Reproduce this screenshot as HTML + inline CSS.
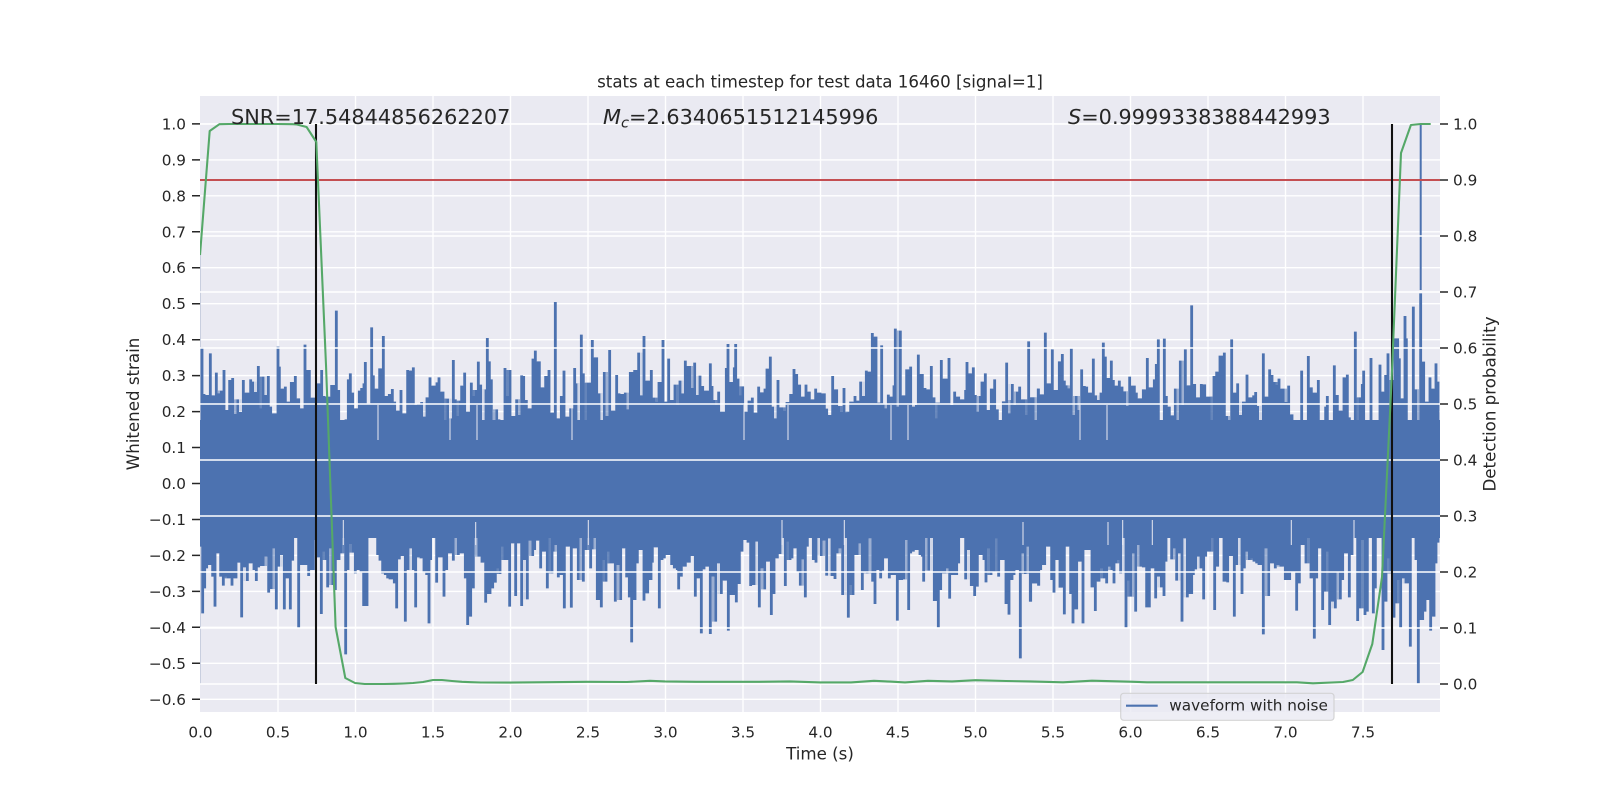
<!DOCTYPE html>
<html>
<head>
<meta charset="utf-8">
<title>stats at each timestep</title>
<style>
html,body{margin:0;padding:0;background:#fff;width:1600px;height:800px;overflow:hidden}
svg{display:block}
text{font-family:"DejaVu Sans","Liberation Sans",sans-serif;fill:#262626}
.t{font-size:15.28px}
.a{font-size:16.67px}
.big{font-size:20.83px}
.m{font-style:italic}
</style>
</head>
<body>
<svg width="1600" height="800" viewBox="0 0 1600 800" xmlns="http://www.w3.org/2000/svg">
<defs>
<clipPath id="c"><rect x="200" y="96" width="1240" height="616"/></clipPath>
<filter id="close" filterUnits="userSpaceOnUse" x="190" y="96" width="1260" height="616" color-interpolation-filters="sRGB">
<feMorphology operator="dilate" radius="1 0"/>
<feMorphology operator="erode" radius="1 0"/>
</filter>
</defs>
<rect width="1600" height="800" fill="#fff"/>
<rect x="200" y="96" width="1240" height="616" fill="#eaeaf2"/>
<!-- left and vertical grid -->
<path stroke="#fff" stroke-width="1.39" fill="none" d="M278 96V712M355.5 96V712M433 96V712M510.5 96V712M588 96V712M665.5 96V712M743 96V712M820.5 96V712M898 96V712M975.5 96V712M1053 96V712M1130.5 96V712M1208 96V712M1285.5 96V712M1363 96V712
M200 123.9H1440M200 159.9H1440M200 195.8H1440M200 231.8H1440M200 267.7H1440M200 303.7H1440M200 339.7H1440M200 375.6H1440M200 411.6H1440M200 447.5H1440M200 483.5H1440M200 519.5H1440M200 555.4H1440M200 591.4H1440M200 627.3H1440M200 663.3H1440M200 699.3H1440"/>
<g clip-path="url(#c)">
<path d="M200.5 250V684" stroke="#c9cfdf" stroke-width="1" fill="none"/>
<g filter="url(#close)">
<rect x="200" y="420" width="1240" height="118" fill="#4c72b0"/>
<g fill="none" stroke="#4c72b0" stroke-width="8.5">
<g transform="translate(200 290) scale(.33333)">
<path d="M6 172V450M12 312V450M18 385V450M24 315V450M31 190V450M38 316V450M44 352V450M49 248V450M55 310V450M64 302V450M72 240V450M78 415V450M84 360V450M89 270V450M98 264V450M105 372V450M113 328V450M120 366V450M130 270V450M136 345V450M143 308V450M152 268V450M158 275V450M166 306V450M175 228V450M182 355V450M189 260V450M196 315V450M205 258V450M212 350V450M218 400V450M224 370V450M234 170V450M238 230V450M243 360V450M250 296V450M256 290V450M264 335V450M274 276V450M280 350V450M286 258V450M296 325V450M302 355V450M309 415V450M315 164V450M322 350V450M328 240V450M332 350V450M339 323V450M345 430V450M352 280V450M358 345V450M365 240V450M372 318V450M378 405V450M385 320V450M395 285V450M402 304V450M409 62V450M416 300V450M423 398V450M432 390V450M438 388V450M445 268V450M451 250V450M458 308V450M466 360V450M472 355V450M478 302V450M485 294V450M492 280V450M496 216V450M503 340V450M510 400V450M515 112V450M520 256V450M527 296V450M534 420V450M539 235V450M545 410V450M550 138V450M560 318V450M568 312V450M577 297V450M584 335V450M590 372V450M597 362V450M603 300V450M609 378V450M615 370V450M623 240V450M631 242V450M640 232V450M647 345V450M655 342V450M665 336V450M673 380V450M681 322V450M690 262V450M695 320V450M703 287V450M711 277V450M717 262V450M723 405V450M729 305V450M736 408V450M743 326V450M751 385V450M760 210V450M766 328V450M773 378V450M780 332V450M785 287V450M794 248V450M802 365V450M808 378V450M814 278V450M820 318V450M828 300V450M835 215V450M842 284V450M850 390V450M858 298V450M862 144V450M868 214V450M874 268V450M880 410V450M885 390V450M890 358V450M897 388V450M905 395V450M915 234V450M922 318V450M930 240V450M938 378V450M944 388V450M950 328V450M957 375V450M965 256V450M971 258V450M979 330V450M987 390V450M992 355V450M999 206V450M1006 182V450M1012 340V450M1018 214V450M1025 292V450M1030 335V450M1037 258V450M1047 240V450M1056 368V450M1066 36V450M1074 385V450M1084 318V450M1092 242V450M1100 380V450M1112 355V450M1124 234V450M1128 280V450M1137 395V450M1144 134V450M1150 250V450M1156 390V450M1164 278V450M1171 370V450M1177 150V450M1190 202V450M1197 310V450M1206 400V450M1213 246V450M1220 378V450M1229 180V450M1237 362V450M1250 255V450M1257 310V450"/>
</g>
<g transform="translate(620 290) scale(.33333)">
<path d="M3 375V450M6 312V450M12 405V450M16 308V450M22 358V450M25 412V450M31 246V450M38 332V450M44 240V450M50 358V450M56 188V450M61 316V450M66 380V450M72 138V450M78 348V450M84 272V450M88 278V450M94 240V450M102 323V450M108 335V450M112 415V450M117 276V450M123 360V450M129 150V450M135 375V450M141 335V450M146 206V450M152 330V450M158 392V450M165 284V450M170 378V450M174 345V450M180 272V450M186 310V450M190 318V450M196 212V450M203 325V450M209 228V450M214 294V450M218 388V450M224 218V450M230 348V450M236 315V450M240 257V450M248 288V450M253 350V450M258 302V450M264 378V450M271 220V450M276 288V450M282 330V450M290 345V450M296 305V450M302 425V450M308 365V450M319 234V450M324 162V450M330 322V450M336 276V450M343 232V450M347 162V450M354 266V450M360 316V450M368 289V450M375 365V450M380 368V450M387 332V450M392 375V450M397 323V450M404 368V450M410 378V450M416 290V450M422 307V450M428 310V450M435 296V450M441 236V450M451 200V450M458 350V450M464 385V450M468 408V450M474 270V450M480 358V450M486 352V450M492 362V450M498 365V450M501 336V450M506 420V450M512 312V450M518 345V450M522 237V450M530 252V450M539 284V450M545 390V450M551 320V450M558 284V450M568 305V450M574 350V450M580 328V450M587 296V450M595 385V450M600 308V450M605 428V450M613 310V450M620 356V450M628 375V450M638 258V450M644 335V450M650 298V450M657 348V450M664 366V450M672 294V450M680 368V450M686 365V450M692 335V450M700 404V450M705 318V450M712 332V450M718 384V450M722 275V450M731 318V450M739 242V450M746 246V450M752 245V450M757 129V450M763 285V450M768 140V450M774 380V450M778 338V450M785 166V450M790 340V450M797 355V450M805 314V450M811 320V450M818 320V450M822 286V450M826 116V450M834 350V450M841 122V450M846 378V450M852 316V450M860 238V450M865 380V450M872 230V450M878 350V450M884 432V450M889 345V450M895 194V450M900 405V450M907 252V450M915 294V450M924 298V450M934 228V450M942 322V450M949 385V450M956 338V450M964 210V450M970 345V450M977 266V450M983 318V450M987 204V450M994 345V450M1004 305V450M1016 320V450M1024 330V450M1028 328V450M1037 300V450M1041 216V450M1047 250V450M1055 405V450M1060 232V450M1066 315V450M1072 365V450M1076 420V450M1081 318V450M1086 275V450M1092 340V450M1096 250V450M1104 360V450M1114 296V450M1118 305V450M1124 268V450M1132 358V450M1141 410V450M1150 334V450M1160 218V450M1167 370V450M1175 330V450M1177 282V450M1187 345V450M1192 305V450M1199 290V450M1205 360V450M1212 328V450M1220 375V450M1226 154V450M1232 390V450M1240 322V450M1248 395V450M1255 296V450"/>
</g>
<g transform="translate(1030 290) scale(.33333)">
<path d="M2 378V450M9 322V450M18 395V450M25 296V450M34 313V450M40 412V450M46 128V450M53 280V450M60 415V450M67 178V450M74 300V450M82 386V450M88 214V450M97 192V450M103 272V450M109 286V450M116 295V450M124 176V450M130 375V450M139 318V450M146 360V450M155 238V450M163 288V450M170 290V450M177 308V450M184 355V450M190 206V450M197 316V450M202 375V450M207 330V450M213 308V450M220 158V450M226 200V450M232 395V450M238 264V450M244 212V450M250 270V450M256 287V450M262 365V450M268 272V450M276 290V450M284 304V450M291 348V450M299 260V450M306 334V450M313 287V450M319 308V450M326 330V450M332 325V450M340 298V450M346 310V450M352 204V450M359 292V450M366 298V450M373 268V450M379 222V450M385 148V450M394 394V450M403 146V450M409 318V450M413 378V450M418 350V450M425 380V450M430 376V450M436 296V450M441 392V450M451 212V450M458 345V450M466 178V450M473 320V450M479 286V450M485 46V450M494 282V450M500 345V450M507 322V450M514 282V450M524 283V450M530 395V450M538 320V450M545 420V450M552 258V450M560 245V450M570 197V450M576 315V450M583 188V450M590 378V450M596 390V450M605 148V450M612 318V450M618 308V450M623 280V450M632 375V450M640 335V450M645 375V450M651 254V450M659 332V450M664 322V450M671 316V450M677 306V450M683 348V450M690 430V450M700 190V450M707 320V450M714 362V450M719 238V450M726 255V450M733 276V450M738 330V450M742 285V450M747 266V450M752 302V450M760 296V450M768 336V450M776 287V450M786 373V450M795 415V450M808 390V450M815 242V450M824 405V450M829 430V450M835 198V450M844 292V450M851 308V450M857 375V450M865 270V450M873 410V450M881 395V450M887 350V450M892 318V450M902 424V450M913 226V450M922 315V450M930 362V450M936 392V450M942 262V450M952 254V450M958 382V450M966 392V450M976 125V450M990 322V450M997 282V450M1001 242V450M1016 415V450M1023 204V450M1030 425V450M1042 392V450M1050 224V450M1056 305V450M1063 425V450M1067 255V450M1074 190V450M1082 350V450M1088 270V450M1095 145V450M1103 145V450M1108 205V450M1118 325V450M1125 78V450M1129 145V450M1135 420V450M1143 418V450M1150 50V450M1157 298V450M1164 420V450M1172 10V450M1181 215V450M1188 335V450M1195 338V450M1200 262V450M1207 296V450M1213 390V450M1218 220V450M1224 275V450"/>
</g>
<g transform="translate(200 520) scale(.33333)">
<path d="M2 0V80M8 0V280M14 0V205M20 0V145M26 0V135M33 0V108M38 0V170M45 0V260M50 0V100M57 0V45M62 0V170M70 0V197M77 0V170M84 0V175M91 0V110M96 0V197M103 0V92M108 0V175M114 0V20M120 0V128M125 0V292M132 0V142M142 0V183M150 0V130M156 0V128M162 0V150M169 0V183M176 0V142M182 0V65M190 0V138M200 0V110M206 0V218M214 0V207M222 0V85M229 0V268M236 0V140M243 0V105M253 0V268M258 0V175M265 0V55M271 0V268M278 0V122M286 0V40M296 0V323M304 0V75M310 0V135M318 0V135M326 0V168M333 0V72M340 0V150M344 0V60M355 0V112M364 0V282M372 0V95M378 0V120M383 0V202M392 0V85M398 0V195M406 0V210M411 0V90M417 0V120M423 0V100M437 0V403M444 0V150M450 0V72M459 0V98M466 0V160M474 0V150M483 0V158M491 0V258M496 0V5M501 0V258M510 0V25M518 0V40M527 0V40M533 0V105M540 0V122M548 0V160M556 0V165M563 0V175M570 0V178M578 0V35M583 0V190M590 0V265M598 0V118M606 0V108M616 0V305M624 0V150M632 0V85M640 0V150M647 0V262M654 0V112M663 0V115M672 0V158M680 0V165M687 0V310M692 0V120M700 0V20M710 0V188M718 0V85M724 0V112M732 0V230M740 0V150M748 0V100M752 0V35M760 0V122M769 0V35M775 0V105M783 0V100M787 0V45M796 0V175M803 0V315M812 0V290M820 0V205M836 0V110M846 0V128M857 0V248M864 0V65M870 0V222M878 0V205M886 0V188M892 0V145M900 0V162M908 0V80M914 0V120M922 0V120M929 0V260M938 0V70M947 0V228M954 0V70M965 0V258M972 0V120M982 0V238M990 0V62M998 0V108M1004 0V90M1012 0V62M1022 0V145M1030 0V95M1037 0V40M1042 0V205M1050 0V45M1056 0V160M1060 0V95M1069 0V75M1075 0V172M1082 0V165M1093 0V265M1100 0V80M1114 0V263M1122 0V85M1130 0V35M1135 0V180M1143 0V40M1150 0V185M1158 0V90M1172 0V145M1177 0V88M1192 0V240M1198 0V115M1204 0V262M1212 0V120M1218 0V185M1226 0V95M1232 0V130M1246 0V245M1255 0V135"/>
</g>
<g transform="translate(620 520) scale(.33333)">
<path d="M2 0V240M8 0V85M13 0V40M20 0V172M28 0V232M35 0V367M40 0V60M45 0V240M52 0V130M58 0V75M65 0V90M72 0V242M78 0V155M83 0V220M88 0V125M93 0V180M97 0V128M103 0V70M110 0V82M118 0V265M126 0V120M133 0V115M139 0V78M146 0V105M155 0V135M163 0V145M172 0V150M176 0V208M184 0V170M190 0V65M196 0V140M202 0V45M208 0V128M213 0V108M220 0V42M226 0V230M230 0V175M236 0V15M244 0V340M252 0V148M259 0V70M264 0V140M271 0V342M276 0V120M282 0V170M287 0V305M298 0V130M304 0V222M310 0V110M316 0V182M325 0V332M332 0V80M337 0V225M344 0V170M349 0V247M358 0V192M366 0V95M372 0V60M377 0V20M384 0V68M392 0V198M397 0V92M402 0V195M408 0V65M418 0V262M424 0V145M428 0V110M434 0V208M441 0V125M448 0V98M454 0V285M462 0V222M466 0V25M472 0V115M480 0V102M496 0V198M504 0V65M510 0V120M516 0V115M522 0V85M530 0V55M534 0V155M541 0V197M546 0V118M556 0V232M562 0V80M570 0V50M574 0V45M580 0V120M588 0V128M596 0V45M604 0V108M611 0V62M620 0V167M626 0V55M636 0V168M645 0V177M652 0V100M660 0V85M668 0V225M685 0V293M692 0V195M699 0V225M704 0V40M712 0V105M720 0V70M727 0V210M730 0V130M736 0V155M742 0V160M748 0V55M758 0V185M765 0V252M770 0V108M776 0V150M782 0V175M788 0V152M795 0V115M801 0V112M808 0V175M812 0V62M818 0V165M825 0V165M832 0V302M838 0V45M845 0V180M851 0V178M857 0V60M866 0V270M872 0V100M880 0V95M887 0V90M893 0V25M900 0V105M907 0V110M911 0V185M918 0V40M926 0V152M935 0V42M943 0V243M948 0V75M955 0V322M962 0V210M968 0V120M974 0V160M982 0V145M989 0V236M995 0V92M1002 0V165M1010 0V165M1016 0V130M1020 0V35M1028 0V42M1037 0V178M1043 0V90M1054 0V198M1064 0V228M1072 0V200M1078 0V40M1084 0V105M1092 0V120M1098 0V187M1106 0V85M1113 0V165M1122 0V155M1129 0V55M1136 0V170M1144 0V65M1150 0V120M1158 0V252M1167 0V284M1176 0V180M1182 0V165M1188 0V150M1194 0V110M1201 0V415M1208 0V100M1216 0V162M1222 0V80M1231 0V245M1238 0V80M1245 0V190M1250 0V170M1256 0V197"/>
</g>
<g transform="translate(1030 520) scale(.33333)">
<path d="M2 0V245M8 0V125M15 0V190M20 0V150M26 0V197M32 0V150M38 0V125M44 0V135M50 0V75M57 0V80M65 0V180M72 0V218M78 0V60M85 0V120M90 0V203M98 0V100M103 0V283M110 0V80M115 0V45M122 0V222M129 0V310M136 0V95M140 0V268M148 0V125M159 0V310M166 0V68M172 0V90M178 0V90M186 0V202M196 0V273M202 0V57M207 0V185M215 0V145M222 0V175M230 0V190M238 0V140M245 0V150M252 0V190M258 0V130M264 0V120M272 0V160M288 0V322M294 0V182M302 0V230M310 0V100M317 0V275M325 0V75M332 0V140M340 0V142M350 0V262M358 0V262M366 0V145M377 0V235M384 0V170M388 0V55M394 0V202M402 0V228M408 0V125M418 0V15M425 0V118M432 0V85M440 0V182M448 0V100M456 0V305M465 0V55M472 0V232M478 0V165M485 0V222M490 0V165M497 0V148M506 0V110M513 0V145M521 0V238M527 0V110M540 0V95M546 0V35M554 0V270M563 0V140M574 0V25M582 0V185M587 0V105M593 0V187M600 0V108M604 0V45M613 0V290M620 0V135M628 0V50M636 0V222M643 0V145M650 0V95M658 0V120M665 0V115M672 0V125M680 0V130M687 0V135M693 0V130M700 0V343M708 0V85M716 0V228M722 0V105M730 0V130M736 0V145M744 0V135M752 0V140M760 0V20M766 0V180M772 0V65M779 0V180M791 0V155M800 0V272M808 0V190M814 0V25M820 0V75M828 0V130M835 0V20M843 0V175M853 0V356M860 0V175M866 0V25M872 0V85M878 0V270M885 0V215M892 0V95M899 0V315M904 0V130M908 0V245M916 0V265M920 0V155M931 0V238M938 0V180M945 0V20M950 0V100M958 0V232M966 0V105M983 0V303M990 0V265M997 0V60M1005 0V285M1012 0V275M1020 0V35M1030 0V280M1036 0V205M1046 0V10M1052 0V10M1059 0V390M1068 0V245M1075 0V115M1082 0V160M1092 0V293M1098 0V250M1104 0V180M1112 0V322M1118 0V175M1128 0V190M1134 0V188M1141 0V380M1150 0V10M1158 0V120M1165 0V490M1172 0V230M1178 0V300M1185 0V275M1190 0V240M1196 0V115M1202 0V332M1212 0V290M1218 0V130M1224 0V68"/>
</g>
</g>
</g>
<path fill="none" stroke="#eaeaf2" stroke-width="1" d="M343.3 520V545M475.7 522V545M588.3 520V545M782 520V545M844.3 520V545M1023 522V545M1108 522V545M1122.7 520V545M1152.3 520V545M1291.3 520V545M1354 520V545M378 405V440M450 405V440M477 405V440M572 405V440M744 405V440M788 405V440M891 405V440M908 405V440M1080 405V440M1107 405V440"/>
<path d="M1420.7 124V290" fill="none" stroke="#4c72b0" stroke-width="2"/>
<!-- right-axis grid (over the waveform) -->
<path stroke="#fff" stroke-width="1.39" fill="none" d="M200 124H1440M200 180H1440M200 236H1440M200 292H1440M200 348H1440M200 404H1440M200 460H1440M200 516H1440M200 572H1440M200 628H1440M200 684H1440"/>
<path d="M200 180H1440" stroke="#c44e52" stroke-width="2.08" fill="none"/>
<path d="M316 124V684M1392 124V684" stroke="#111" stroke-width="2.08" fill="none"/>
<path fill="none" stroke="#55a868" stroke-width="2.08" stroke-linejoin="round" d="M200 255L209.7 131L219.4 124.2L229 124L239 124L258 124L277 124L293 124.2L296.9 124.5L306.6 127L316.3 142L326 365L335.6 627L345.3 678L355 683L364.7 684L374.4 684L384 684L394 683.8L403.5 683.5L413 683L423 682L433 680L442 680L452 681L462 681.8L471 682.2L481 682.5L510 682.6L550 682.2L587 681.8L627 682L650 680.8L665 681.4L696 681.8L758 681.8L790 681.4L820 682.4L851 682.4L874 680.8L890 681.6L905 682.4L928 680.8L952 681.4L975.5 680.2L1006 681L1030 681.4L1063 682.3L1092 680.7L1130 681.7L1147 682.3L1297 682.3L1313 683.3L1343 682L1352.8 680L1362.6 672L1372.3 644L1382 577L1391.6 380L1401 153L1410.9 125L1420.6 124L1430.7 124"/>
</g>
<!-- ticks -->
<path stroke="#262626" stroke-width="1.5" fill="none" d="M192 123.9H200M192 159.9H200M192 195.8H200M192 231.8H200M192 267.7H200M192 303.7H200M192 339.7H200M192 375.6H200M192 411.6H200M192 447.5H200M192 483.5H200M192 519.5H200M192 555.4H200M192 591.4H200M192 627.3H200M192 663.3H200M192 699.3H200"/>
<path stroke="#262626" stroke-width="1.5" fill="none" d="M1440 124H1448M1440 180H1448M1440 236H1448M1440 292H1448M1440 348H1448M1440 404H1448M1440 460H1448M1440 516H1448M1440 572H1448M1440 628H1448M1440 684H1448"/>
<!-- legend -->
<rect x="1120.7" y="693.3" width="213.3" height="27" rx="3" ry="3" fill="#eaeaf2" fill-opacity=".8" stroke="#ccc" stroke-opacity=".8" stroke-width="1.2"/>
<path d="M1126 705.7H1157.7" stroke="#4c72b0" stroke-width="2.08" fill="none"/>
<text class="t" x="1169.3" y="710.7">waveform with noise</text>
<!-- annotations -->
<text class="big" x="231" y="124">SNR=17.54844856262207</text>
<text class="big" x="603" y="124"><tspan class="m">M</tspan><tspan class="m" font-size="14.6" dy="3.5">c</tspan><tspan dy="-3.5">=2.6340651512145996</tspan></text>
<text class="big" x="1068" y="124"><tspan class="m">S</tspan>=0.9999338388442993</text>
<text class="a" x="820" y="87.7" text-anchor="middle">stats at each timestep for test data 16460 [signal=1]</text>
<!-- left tick labels -->
<g text-anchor="end">
<text class="t" x="186" y="129.4">1.0</text>
<text class="t" x="186" y="165.4">0.9</text>
<text class="t" x="186" y="201.3">0.8</text>
<text class="t" x="186" y="237.3">0.7</text>
<text class="t" x="186" y="273.2">0.6</text>
<text class="t" x="186" y="309.2">0.5</text>
<text class="t" x="186" y="345.2">0.4</text>
<text class="t" x="186" y="381.1">0.3</text>
<text class="t" x="186" y="417.1">0.2</text>
<text class="t" x="186" y="453">0.1</text>
<text class="t" x="186" y="489">0.0</text>
<text class="t" x="186" y="525">−0.1</text>
<text class="t" x="186" y="560.9">−0.2</text>
<text class="t" x="186" y="596.9">−0.3</text>
<text class="t" x="186" y="632.8">−0.4</text>
<text class="t" x="186" y="668.8">−0.5</text>
<text class="t" x="186" y="704.8">−0.6</text>
</g>
<!-- right tick labels -->
<text class="t" x="1453" y="129.5">1.0</text>
<text class="t" x="1453" y="185.5">0.9</text>
<text class="t" x="1453" y="241.5">0.8</text>
<text class="t" x="1453" y="297.5">0.7</text>
<text class="t" x="1453" y="353.5">0.6</text>
<text class="t" x="1453" y="409.5">0.5</text>
<text class="t" x="1453" y="465.5">0.4</text>
<text class="t" x="1453" y="521.5">0.3</text>
<text class="t" x="1453" y="577.5">0.2</text>
<text class="t" x="1453" y="633.5">0.1</text>
<text class="t" x="1453" y="689.5">0.0</text>
<!-- x tick labels -->
<g text-anchor="middle">
<text class="t" x="200.5" y="737.3">0.0</text>
<text class="t" x="278" y="737.3">0.5</text>
<text class="t" x="355.5" y="737.3">1.0</text>
<text class="t" x="433" y="737.3">1.5</text>
<text class="t" x="510.5" y="737.3">2.0</text>
<text class="t" x="588" y="737.3">2.5</text>
<text class="t" x="665.5" y="737.3">3.0</text>
<text class="t" x="743" y="737.3">3.5</text>
<text class="t" x="820.5" y="737.3">4.0</text>
<text class="t" x="898" y="737.3">4.5</text>
<text class="t" x="975.5" y="737.3">5.0</text>
<text class="t" x="1053" y="737.3">5.5</text>
<text class="t" x="1130.5" y="737.3">6.0</text>
<text class="t" x="1208" y="737.3">6.5</text>
<text class="t" x="1285.5" y="737.3">7.0</text>
<text class="t" x="1363" y="737.3">7.5</text>
</g>
<text class="a" x="820" y="759.5" text-anchor="middle">Time (s)</text>
<text class="a" transform="translate(139 404) rotate(-90)" text-anchor="middle">Whitened strain</text>
<text class="a" transform="translate(1495.5 404) rotate(-90)" text-anchor="middle">Detection probability</text>
</svg>
</body>
</html>
